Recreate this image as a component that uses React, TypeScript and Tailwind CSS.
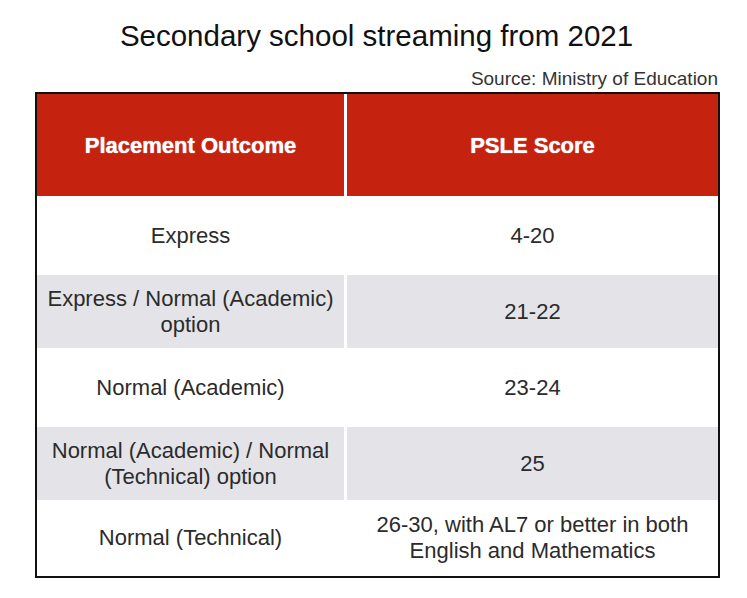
const ROWS = [
  { outcome: 'Express', score: '4-20', h: 'h-[79px]', shaded: false },
  { outcome: 'Express / Normal (Academic) option', score: '21-22', h: 'h-[73px]', shaded: true },
  { outcome: 'Normal (Academic)', score: '23-24', h: 'h-[79px]', shaded: false },
  { outcome: 'Normal (Academic) / Normal (Technical) option', score: '25', h: 'h-[73px]', shaded: true },
  {
    outcome: 'Normal (Technical)',
    score: '26-30, with AL7 or better in both English and Mathematics',
    h: 'h-[76px]',
    shaded: false,
  },
];

export default function App() {
  return (
    <div className="w-[747px] h-[598px] bg-white text-[#2b2b2b] font-['Liberation_Sans',Arial,sans-serif]">
      <h1 className="pt-[20px] text-center text-[29.5px] leading-[32px] text-[#111] pl-[6px]">
        Secondary school streaming from 2021
      </h1>
      <p className="mt-[17px] mb-[3px] pr-[29px] text-right text-[19px] leading-[20px] text-[#333]">
        Source: Ministry of Education
      </p>

      <div className="ml-[35px] w-[685px] border-2 border-[#111]">
        <div className="grid grid-cols-[307px_371px] gap-x-[3px] bg-white">
          <div className="flex h-[102px] items-center justify-center bg-[#c5230f] text-[22px] font-bold text-white [text-shadow:0_0_1px_#fff]">
            Placement Outcome
          </div>
          <div className="flex h-[102px] items-center justify-center bg-[#c5230f] text-[22px] font-bold text-white [text-shadow:0_0_1px_#fff]">
            PSLE Score
          </div>

          {ROWS.map((r) => (
            <Row key={r.outcome} {...r} />
          ))}
        </div>
      </div>
    </div>
  );
}

function Row({ outcome, score, h, shaded }: { outcome: string; score: string; h: string; shaded: boolean }) {
  const cell = `flex ${h} items-center justify-center px-2 text-center text-[22px] leading-[26px] ${
    shaded ? 'bg-[#e4e4e8]' : 'bg-white'
  }`;
  return (
    <>
      <div className={cell}>{outcome}</div>
      <div className={cell}>
        <span className={score.length > 10 ? 'max-w-[330px]' : ''}>{score}</span>
      </div>
    </>
  );
}
